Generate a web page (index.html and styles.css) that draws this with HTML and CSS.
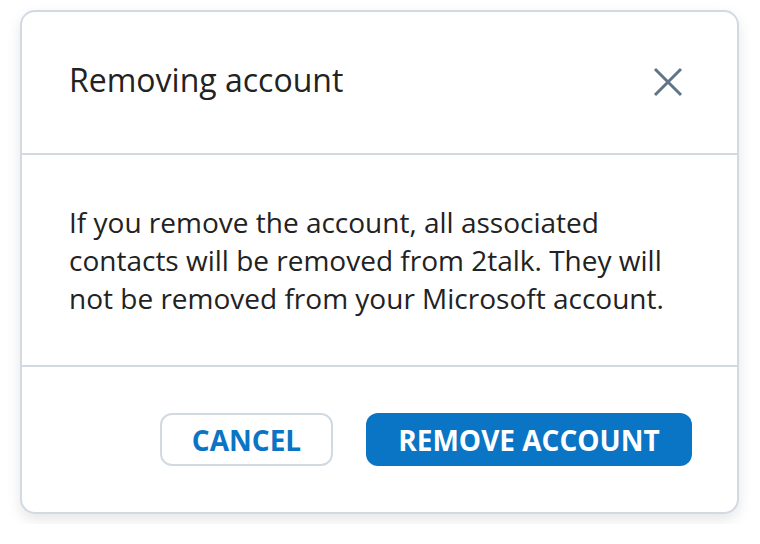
FILE: index.html
```html
<!DOCTYPE html>
<html>
<head>
<meta charset="utf-8">
<link rel="stylesheet" href="styles.css">
</head>
<body>
<div class="dialog">
  <div class="header">
    <h1 class="title">Removing account</h1>
    <button class="close" aria-label="Close">
      <svg width="30" height="30" viewBox="0 0 30 30"><path d="M2 2 L28 28 M28 2 L2 28" stroke="#5f7587" stroke-width="3" fill="none"/></svg>
    </button>
  </div>
  <div class="body">
    <p class="text">If you remove the account, all associated contacts will be removed from 2talk. They will not be removed from your Microsoft account.</p>
  </div>
  <div class="footer">
    <button class="btn btn-cancel">CANCEL</button>
    <button class="btn btn-primary">REMOVE ACCOUNT</button>
  </div>
</div>
</body>
</html>
```
FILE: styles.css
```css
html, body {
  margin: 0;
  padding: 0;
  background: #ffffff;
}
body {
  padding: 10px 20px;
  font-family: "Open Sans", sans-serif;
}
.dialog {
  width: 719px;
  box-sizing: border-box;
  border: 2px solid #d1dae3;
  border-radius: 15px;
  background: #fff;
  box-shadow: 0 6px 14px rgba(0, 0, 0, 0.10);
}
.header {
  height: 143px;
  box-sizing: border-box;
  display: flex;
  align-items: center;
  justify-content: space-between;
  padding: 0 54px 0 47px;
  border-bottom: 2px solid #d1dae3;
}
.title {
  margin: 0 0 5px;
  font-weight: 400;
  font-size: 32px;
  color: #222;
  line-height: 1;
}
.close {
  background: none;
  border: 0;
  padding: 0;
  margin-bottom: 2px;
  width: 30px;
  height: 30px;
  display: block;
}
.close svg { display: block; }
.body {
  height: 212px;
  box-sizing: border-box;
  padding: 0 47px;
  display: flex;
  align-items: center;
  border-bottom: 2px solid #d1dae3;
}
.text {
  margin: 0;
  font-size: 28px;
  line-height: 38px;
  color: #222;
}
.footer {
  display: flex;
  justify-content: flex-end;
  gap: 33px;
  padding: 46px 45px 46px;
}
.btn {
  font-family: "Open Sans", sans-serif;
  font-weight: 700;
  font-size: 28px;
  height: 53px;
  border-radius: 12px;
  box-sizing: border-box;
  cursor: pointer;
}
.btn-cancel {
  width: 173px;
  background: #fff;
  color: #0a74c5;
  border: 2px solid #d1dae3;
}
.btn-primary {
  width: 326px;
  background: #0a74c5;
  color: #fff;
  border: 0;
}
```
